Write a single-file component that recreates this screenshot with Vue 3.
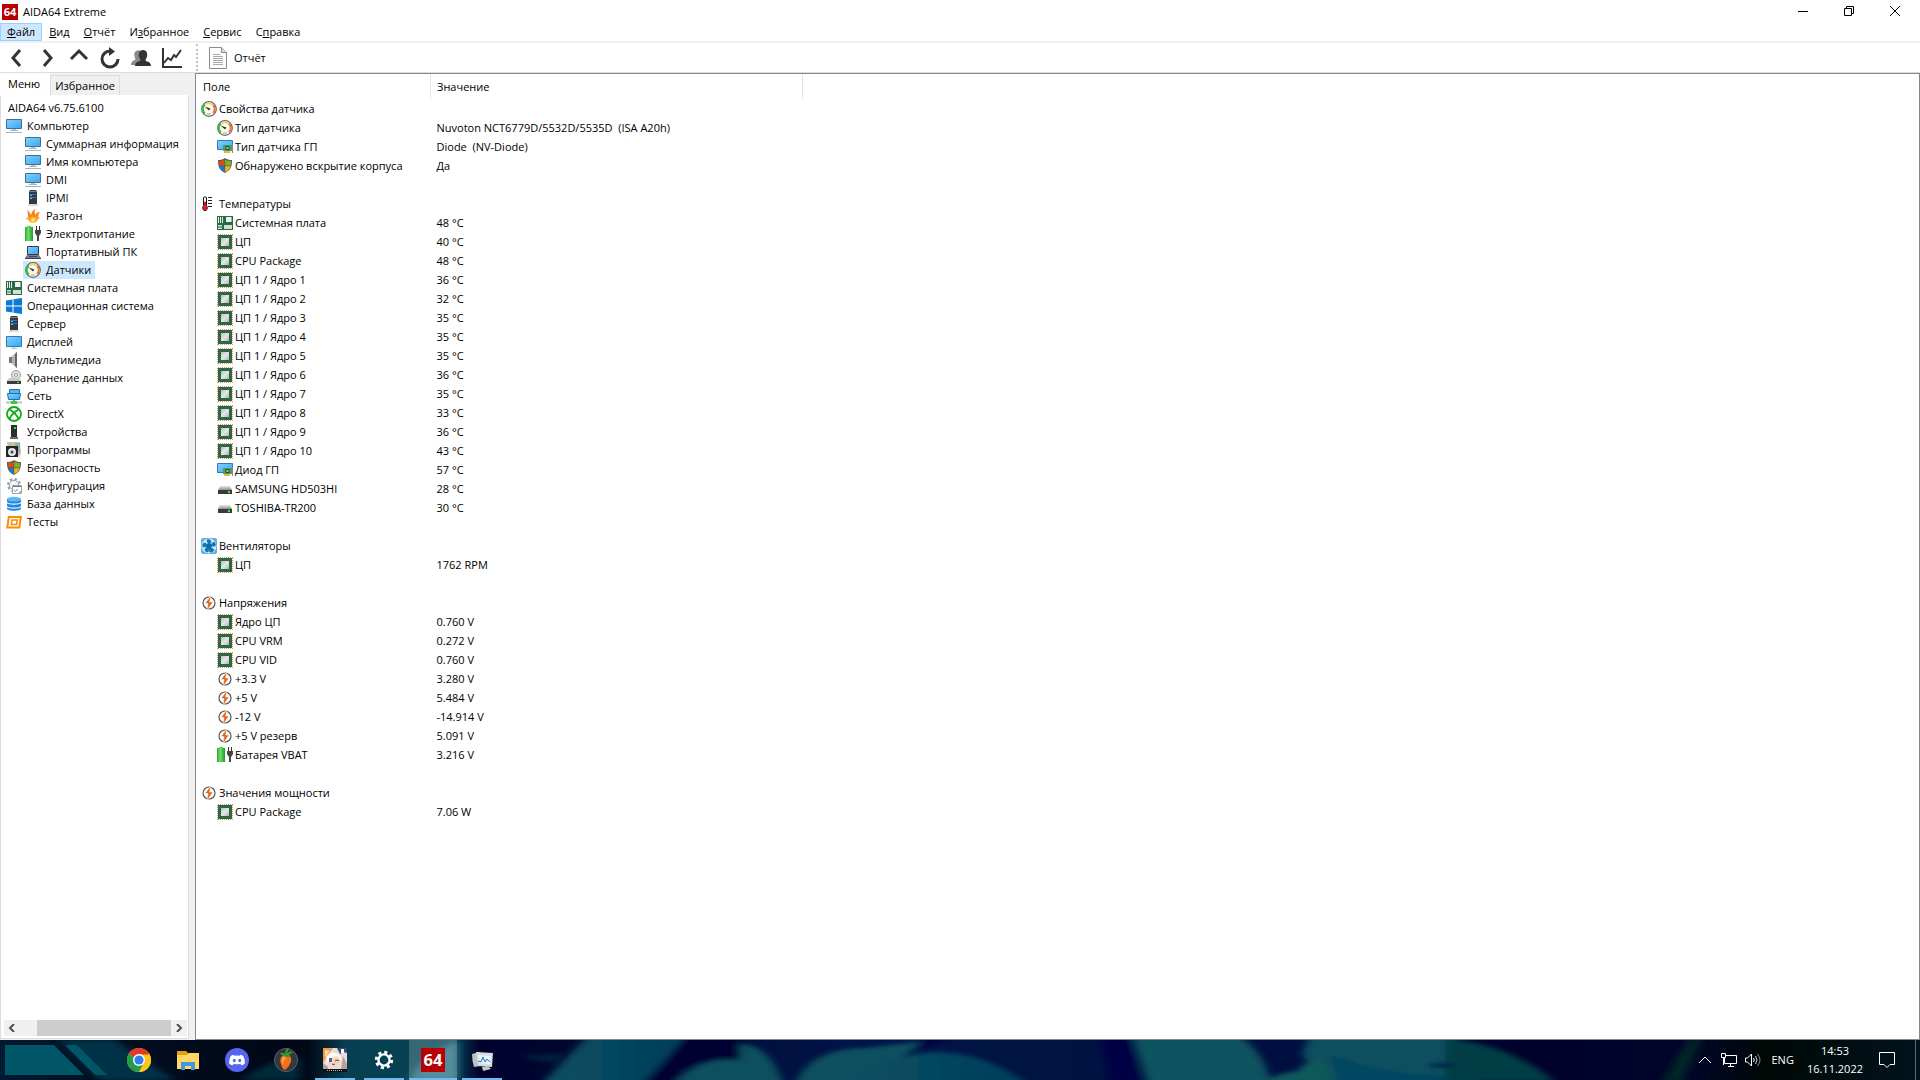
<template>
  <div class="desktop">
    <svg class="sprite" aria-hidden="true">
      <defs>
        <linearGradient id="gScreen" x1="0" y1="0" x2="1" y2="1">
          <stop offset="0" stop-color="#84d0ff" />
          <stop offset="1" stop-color="#3aa6f2" />
        </linearGradient>
        <linearGradient id="gChip" x1="0" y1="0" x2="1" y2="1">
          <stop offset="0" stop-color="#bdbdbd" />
          <stop offset="0.5" stop-color="#e6e6e6" />
          <stop offset="1" stop-color="#b4b4b4" />
        </linearGradient>
        <linearGradient id="gBattery">
          <stop offset="0" stop-color="#2ba52f" />
          <stop offset="0.4" stop-color="#6fe068" />
          <stop offset="1" stop-color="#23962a" />
        </linearGradient>
        <linearGradient id="gMetal" x1="0" y1="0" x2="0" y2="1">
          <stop offset="0" stop-color="#e8e8e8" />
          <stop offset="1" stop-color="#8f8f8f" />
        </linearGradient>
        <linearGradient id="gFlame" x1="0" y1="0" x2="0" y2="1">
          <stop offset="0" stop-color="#f05a1a" />
          <stop offset="1" stop-color="#ffc21c" />
        </linearGradient>
      </defs>
      <symbol id="computer" viewBox="0 0 16 16">
        <path d="M0.5 1.5h15v9h-15z" fill="url(#gScreen)" stroke="#3f6f92" />
        <path d="M6 11h4v2H6z" fill="#b5c2cc" />
        <path d="M4 12.5h8M0 14.5h16" stroke="#a9b4c4" />
      </symbol>
      <symbol id="display" viewBox="0 0 16 16">
        <path d="M0.5 2.5h15v10h-15z" fill="url(#gScreen)" stroke="#2b7fb5" />
        <path d="M5 14.5h6M7 13.5h2" stroke="#9cc9e6" />
      </symbol>
      <symbol id="server" viewBox="0 0 16 16">
        <path d="M5 0h6l1 2v12H4V2z" fill="#35383c" />
        <path d="M5 1h6v1H5z" fill="#7d8085" />
        <path d="M5 4.5h6M5 7.5h6" stroke="#1b7fe8" />
        <path d="M5 5.5h2M5 8.5h2" stroke="#4fc3ff" />
        <path d="M3 15h10" stroke="#b5b5b5" />
      </symbol>
      <symbol id="flame" viewBox="0 0 16 16">
        <path d="M2 2c2 1 3 3 4 5 1-3 2-5 4-6-1 3 0 4 0 6 1-2 3-3 5-3-2 2-1 3-2 5l2 1c-2 0-2 3-4 4-3 2-6 1-7-1-1-2-3-2-4-2 2-1 3 0 3-3 0-2 0-4-1-6z" fill="url(#gFlame)" />
        <path d="M7 14c-2-2 0-4 1-5 0 2 2 1 3 1-1 2-1 4-4 4z" fill="#ffe26b" />
      </symbol>
      <symbol id="power" viewBox="0 0 16 16">
        <path d="M2 0h4v1h2V15H0V1h2z" fill="url(#gBattery)" />
        <path d="M11.500 0v4M14.500 0v4" stroke="#333" />
        <path d="M10 4h6v3l-2 3h-2l-2-3z" fill="#444" />
        <path d="M13 9v6" stroke="#444" stroke-width="2" />
      </symbol>
      <symbol id="laptop" viewBox="0 0 16 16">
        <path d="M2.500 2.500h11v8h-11z" fill="url(#gScreen)" stroke="#333a42" />
        <path d="M2 11h12l2 3H0z" fill="#777e86" />
        <path d="M0 14.500h16" stroke="#383d42" />
        <path d="M4 12.500h8" stroke="#444a50" />
      </symbol>
      <symbol id="gauge" viewBox="0 0 16 16">
        <circle cx="8" cy="8" r="7.300" fill="#fffdf3" stroke="#666" stroke-width="1.200" />
        <path d="M4 12.500A5.500 5.500 0 0 1 4 3.600" fill="none" stroke="#31c431" stroke-width="2" />
        <path d="M5 3.200A5.500 5.500 0 0 1 12 4" fill="none" stroke="#f4cf74" stroke-width="2" />
        <path d="M12 4A5.500 5.500 0 0 1 12 12" fill="none" stroke="#f07331" stroke-width="2" />
        <path d="M3.500 5.500L9.500 7.500 8 9.500z" fill="#333" />
        <path d="M6 13h4" stroke="#999" />
      </symbol>
      <symbol id="board" viewBox="0 0 16 16">
        <path d="M0 1h16v14H0z" fill="#256b45" />
        <path d="M1.500 2v6M3.500 2v6M5.500 2v6" stroke="#e6eee6" />
        <path d="M9 2h5.500v5H9z" fill="#f3f3f3" />
        <path d="M1 10h4v4H1zM7 10h8v4H7z" fill="#d6ddd6" />
        <path d="M1 12h4" stroke="#256b45" />
      </symbol>
      <symbol id="windows" viewBox="0 0 16 16">
        <path d="M0 2.500l6.500-1v6H0zM7.500 1.300L16 0v7.500H7.500zM0 8.500h6.500v6L0 13.600zM7.500 8.500H16V16l-8.500-1.300z" fill="#0a7bd8" />
      </symbol>
      <symbol id="speaker" viewBox="0 0 16 16">
        <path d="M3 5h3v6H3z" fill="#6f757b" />
        <path d="M6 4l5-4v16l-5-4z" fill="#b2b6ba" />
        <path d="M9 2l2-2v16l-2-2z" fill="#62676d" />
      </symbol>
      <symbol id="storage" viewBox="0 0 16 16">
        <circle cx="10" cy="5" r="4.500" fill="#e2e2e2" stroke="#999" />
        <circle cx="10" cy="5" r="1.500" fill="#fff" stroke="#999" />
        <path d="M3 8h10l2 3H1z" fill="#c8c8c8" />
        <path d="M1 11h14v3H1z" fill="#3a3a3a" />
        <path d="M11 12.500h2" stroke="#3f3" />
      </symbol>
      <symbol id="network" viewBox="0 0 16 16">
        <path d="M3.500 1.500h10v9h-10z" fill="#56b4ef" stroke="#2173a8" />
        <path d="M1.500 5.500h13l-1 6h-11z" fill="url(#gScreen)" stroke="#2173a8" />
        <path d="M0 14.500h16" stroke="#b9c4bd" stroke-width="2" />
        <path d="M7 12h2v1h2v3H5v-3h2z" fill="#45c04b" />
      </symbol>
      <symbol id="directx" viewBox="0 0 16 16">
        <circle cx="8" cy="8" r="7" fill="#fff" stroke="#0eaa16" stroke-width="1.800" />
        <path d="M3.500 13C5 9 8 6 12.500 3.500M12.500 13C11 9 8 6 3.500 3.500" fill="none" stroke="#0eaa16" stroke-width="1.800" />
      </symbol>
      <symbol id="device" viewBox="0 0 16 16">
        <path d="M5 1h6v12H5z" fill="#2d2d2d" />
        <path d="M8 3h2v2H8z" fill="#38e138" />
        <path d="M4 13h8v2H4z" fill="#6c6c6c" />
      </symbol>
      <symbol id="programs" viewBox="0 0 16 16">
        <path d="M1 0h13l1 12-3 3H3z" fill="#c9c3ad" />
        <path d="M9 1h5v9h-4z" fill="#8cb5a5" />
        <path d="M0 4h12v11H0z" fill="#252525" />
        <circle cx="6" cy="10" r="4" fill="#e4e7eb" />
        <circle cx="6" cy="10" r="1.500" fill="#444" />
        <path d="M12 15h3" stroke="#ddd" />
      </symbol>
      <symbol id="shield" viewBox="0 0 16 16">
        <path d="M8 0c2 1.500 4 2 7 2 0 6-1 10-7 13C2 12 1 8 1 2c3 0 5-.5 7-2z" fill="#555c5f" />
        <path d="M7.500 1.800V7.500H2.200Q2 5 2 3q3 0 5.500-1.200z" fill="#e24a12" />
        <path d="M8.200 1.800V7.500h5.500Q14 5 14 3 11 3 8.200 1.800z" fill="#75b61b" />
        <path d="M2.300 8.200h5.200v5.700Q3.500 12 2.300 8.200z" fill="#1579d6" />
        <path d="M13.600 8.200H8.200v5.700Q12.500 12 13.600 8.200z" fill="#f6b418" />
      </symbol>
      <symbol id="config" viewBox="0 0 16 16">
        <circle cx="8" cy="7" r="6" fill="none" stroke="#929ba2" stroke-width="2" stroke-dasharray="2.300 2.400" />
        <circle cx="8" cy="7" r="4.700" fill="#f4f5f6" stroke="#929ba2" />
        <path d="M6.500 7.500h9v8h-9z" fill="#fff" stroke="#9da1a4" />
        <path d="M7 8.500h8" stroke="#777" />
        <path d="M8 12l1.500 1.500L12 11" fill="none" stroke="#3a8fd8" />
        <path d="M13 14h2" stroke="#777" />
      </symbol>
      <symbol id="database" viewBox="0 0 16 16">
        <path d="M1 3v9.500c0 3 14 3 14 0V3z" fill="#2386dd" />
        <ellipse cx="8" cy="3.200" rx="7" ry="2.400" fill="#5fb7f7" />
        <path d="M1 6c0 2.800 14 2.800 14 0M1 10c0 2.800 14 2.800 14 0" fill="none" stroke="#e9f5ff" stroke-width="1.200" />
      </symbol>
      <symbol id="tests" viewBox="0 0 16 16">
        <path d="M2.800 3h12l-1.500 10.500H1.300z" fill="#fff" stroke="#ff8c00" stroke-width="2" />
        <path d="M6 6h5.200l-.6 4.500H5.400z" fill="#fff" stroke="#ff8c00" stroke-width="1.600" />
      </symbol>
      <symbol id="gpu" viewBox="0 0 16 16">
        <path d="M0.500 1.500h15v9h-15z" fill="url(#gScreen)" stroke="#2b7fb5" />
        <path d="M6 6h9v6H6z" fill="#4f9a72" />
        <path d="M9 7.500h3v3H9z" fill="#9fd2b0" stroke="#164c2e" />
        <path d="M15.500 5v9" stroke="#888" />
        <path d="M7 12h6v2H7z" fill="#f0b429" />
      </symbol>
      <symbol id="thermo" viewBox="0 0 16 16">
        <path d="M2.500 1.500q1.500-1.500 3 0v8q1.500 2 .5 4-2 2.500-4 0-1-2 .5-4z" fill="#fff" stroke="#111" />
        <path d="M3.500 6h1v4l1 1v2.500h-3V11l1-1z" fill="#e0131e" stroke="#e0131e" />
        <path d="M7 1.500h4M7 4.500h4M7 7.500h4M7 10.500h4" stroke="#222" />
      </symbol>
      <symbol id="cpu" viewBox="0 0 16 16">
        <path d="M0.500 1v15M15.500 1v15M1 0.500h15M1 15.500h15" stroke="#c9a74a" stroke-dasharray="1 1" />
        <path d="M1 1h14v14H1z" fill="#2f6549" />
        <path d="M4 4h8v8H4z" fill="url(#gChip)" />
      </symbol>
      <symbol id="disk" viewBox="0 0 16 16">
        <path d="M3 5h10l2 4H1z" fill="url(#gMetal)" />
        <path d="M1 9h14v4H1z" fill="#3a3a3a" />
        <path d="M11 10h2v2h-2z" fill="#3df03d" />
      </symbol>
      <symbol id="fan" viewBox="0 0 16 16">
        <rect width="16" height="16" rx="2" fill="#5fb0de" />
        <circle cx="8" cy="8" r="7.500" fill="#cfe9f7" />
        <path d="M8 8L6 2q2-1 4 1zM8 8l5-4q2 2 1 4zM8 8l5 4q-2 3-4 2zM8 8l-1 6q-3 0-3-3zM8 8L2 9q-1-4 2-4z" fill="#1478b4" stroke="#1478b4" stroke-linejoin="round" />
        <circle cx="8" cy="8" r="2.500" fill="#0f6ba5" />
      </symbol>
      <symbol id="volt" viewBox="0 0 16 16">
        <circle cx="8" cy="8" r="6" fill="#fff" stroke="#555" stroke-width="1.200" />
        <path d="M10 0.500L4 8.500h3L6 15.500l6-8.500H8.700z" fill="#e0671c" stroke="#fff" stroke-width="0.500" />
      </symbol>
    </svg>

    <main class="window">
      <header class="titlebar">
        <svg class="logo" viewBox="0 0 16 16">
          <path d="M0 0h16v16H0z" fill="#b80000" />
          <text x="8" y="12" text-anchor="middle" class="logo-text">64</text>
        </svg>
        <h1>AIDA64 Extreme</h1>
        <div class="controls">
          <button aria-label="Свернуть">
            <svg viewBox="0 0 10 10"><path d="M0 5.500h10" /></svg>
          </button>
          <button aria-label="Свернуть в окно">
            <svg viewBox="0 0 10 10"><path d="M0.500 2.500h7v7h-7zM2.500 2.500v-2h7v7h-2" /></svg>
          </button>
          <button aria-label="Закрыть">
            <svg viewBox="0 0 10 10"><path d="M0 0l10 10M10 0L0 10" /></svg>
          </button>
        </div>
      </header>

      <nav class="menubar">
        <button v-for="(m, i) in menus" :key="m[1]" :class="{ active: i === 0 }">
          {{ m[0] }}<u>{{ m[1] }}</u>{{ m[2] }}
        </button>
      </nav>

      <div class="toolbar">
        <button aria-label="Назад">
          <svg viewBox="0 0 22 22"><path d="M14 3L7 11l7 8" /></svg>
        </button>
        <button aria-label="Вперёд">
          <svg viewBox="0 0 22 22"><path d="M7 3l7 8-7 8" /></svg>
        </button>
        <button aria-label="Вверх">
          <svg viewBox="0 0 22 22"><path d="M3 12l8-8 8 8" /></svg>
        </button>
        <button aria-label="Обновить">
          <svg viewBox="0 0 22 22">
            <path d="M11 4a8 8 0 1 0 8 8" />
            <path d="M10 0l6 4.500-6 4.500z" class="solid" />
          </svg>
        </button>
        <button aria-label="Пользователь">
          <svg viewBox="0 0 22 22">
            <path d="M1 18q0-4 4-5 1-1 0-2-2-5 1-7 3-2 6 1v13z" class="shade" />
            <path d="M5 19q0-4 5-5 1-1 0-2-2-3-1-6 1-3 4-3t4 3q1 3-1 6-1 1 0 2 5 1 5 5z" class="solid" />
          </svg>
        </button>
        <button aria-label="График">
          <svg viewBox="0 0 22 22">
            <path d="M2 1v19h19" class="thin" />
            <path d="M3 16l4-5 3 2 3-5 2 2 5-7" class="thin" />
          </svg>
        </button>
        <span class="separator"></span>
        <button class="report">
          <svg viewBox="0 0 18 22">
            <path d="M0.500 0.500h12l5 5v16h-17z" fill="#fcfcfc" stroke="#8a8a8a" />
            <path d="M12.500 0.500v5h5" fill="#ddd" stroke="#8a8a8a" />
            <path d="M4 7.500h7M4 9.500h10M4 11.500h10M4 13.500h10M4 15.500h10M4 17.500h10" stroke="#aaa" />
          </svg>
          Отчёт
        </button>
      </div>

      <div class="body">
        <aside class="side">
          <div class="tabs">
            <button class="tab current">Меню</button>
            <button class="tab">Избранное</button>
          </div>
          <div class="tree">
            <ul>
              <li class="root"><a href="#">AIDA64 v6.75.6100</a></li>
              <li v-for="n in tree" :key="n.text" :class="{ child: n.child }">
                <a href="#" :class="{ selected: n.selected }">
                  <svg class="icon"><use :href="'#' + n.icon" /></svg>{{ n.text }}
                </a>
              </li>
            </ul>
            <div class="scrollbar">
              <button aria-label="Влево"><svg viewBox="0 0 8 8"><path d="M6 0L2 4l4 4" /></svg></button>
              <div class="track"><div class="thumb"></div></div>
              <button aria-label="Вправо"><svg viewBox="0 0 8 8"><path d="M2 0l4 4-4 4" /></svg></button>
            </div>
          </div>
        </aside>

        <section class="content">
          <table>
            <thead>
              <tr>
                <th class="field">Поле</th>
                <th class="value">Значение</th>
                <th></th>
              </tr>
            </thead>
            <tbody v-for="g in groups" :key="g.title">
              <tr>
                <td>
                  <div class="cell"><svg class="icon"><use :href="'#' + g.icon" /></svg>{{ g.title }}</div>
                </td>
                <td></td>
                <td></td>
              </tr>
              <tr v-for="r in g.rows" :key="r[1]">
                <td>
                  <div class="cell nested"><svg class="icon"><use :href="'#' + r[0]" /></svg>{{ r[1] }}</div>
                </td>
                <td class="value">{{ r[2] }}</td>
                <td></td>
              </tr>
              <tr class="gap"><td colspan="3"></td></tr>
            </tbody>
          </table>
        </section>
      </div>
    </main>

    <footer class="taskbar">
      <svg class="wallpaper" viewBox="0 0 1920 40" preserveAspectRatio="none" aria-hidden="true">
        <defs>
          <filter id="soft" x="-5%" y="-50%" width="110%" height="200%"><feGaussianBlur stdDeviation="5 2" /></filter>
          <linearGradient id="gBase">
            <stop offset="0" stop-color="#001b30" />
            <stop offset="0.070" stop-color="#020c1f" />
            <stop offset="0.160" stop-color="#010817" />
            <stop offset="0.180" stop-color="#063f50" />
            <stop offset="0.235" stop-color="#064454" />
            <stop offset="0.250" stop-color="#00022d" />
            <stop offset="0.300" stop-color="#000830" />
            <stop offset="0.450" stop-color="#001448" />
            <stop offset="0.530" stop-color="#001443" />
            <stop offset="0.700" stop-color="#000d40" />
            <stop offset="0.800" stop-color="#00012b" />
            <stop offset="0.880" stop-color="#000629" />
            <stop offset="0.920" stop-color="#000805" />
            <stop offset="1" stop-color="#00131c" />
          </linearGradient>
          <linearGradient id="gTeal">
            <stop offset="0" stop-color="#0b4f5e" />
            <stop offset="1" stop-color="#003d5d" />
          </linearGradient>
        </defs>
        <path d="M0 0h1920v40H0z" fill="url(#gBase)" />
        <g filter="url(#soft)">
          <path d="M60 0h55l60 40H100z" fill="#003047" />
          <path d="M240 40q30-20 60-24v24z" fill="#002a3a" />
          <path d="M458 0q-40 20-48 40h48z" fill="#2b7186" />
          <path d="M518 17l45-4-8 10z" fill="#00203a" />
          <path d="M540 46Q570 14 590-6h100L640 46z" fill="url(#gTeal)" />
          <path d="M685-4h55v24q-35-4-60 14l-10 12h-26z" fill="#000032" />
          <path d="M672 46q24-30 68-26V4q30 0 44 42z" fill="#0b4f5e" />
          <path d="M794 46q15-38 70-38l70-8q-40 20-60 32l-10 14z" fill="#0b4f5e" />
          <path d="M840 46q50-34 100-34 50 2 90 34z" fill="url(#gTeal)" />
          <path d="M930-4h30q-30 10-50 14z" fill="#00003d" />
          <path d="M1100-4h30l12 48h-32z" fill="#000044" />
          <path d="M1132-6h105q30 20 34 52h-122z" fill="#0b5260" />
          <path d="M1310-6h145l20 52h-155q-5-16-18-32z" fill="#09505f" />
          <path d="M1330 14q50 22 130 22v10h-120z" fill="#004562" />
          <path d="M1445-2q70 8 110 44h-110z" fill="#033e45" />
          <path d="M1430 23h24v5h-24z" fill="#00204a" />
          <path d="M1265 46q8-14 30-14l20-16q15 10 20 30z" fill="#0d585a" />
          <path d="M1690-2h12l-20 44h-20z" fill="#002527" />
        </g>
      </svg>

      <button class="start" aria-label="Пуск">
        <svg viewBox="0 0 102 30">
          <path d="M0 0h49l30 30H0z" fill="#005566" />
          <path d="M60 0h12l30 30H90z" fill="#005566" />
        </svg>
      </button>

      <div class="apps">
        <button aria-label="Chrome">
          <svg viewBox="0 0 24 24">
            <circle cx="12" cy="12" r="12" fill="#fbc617" />
            <path d="M12 12L1.600 6A12 12 0 0 1 22.400 6z" fill="#df3a2d" />
            <path d="M1.600 6A12 12 0 0 0 12 24l5.200-9L12 12z" fill="#239c4b" />
            <path d="M12 6.500h10.700A12 12 0 0 1 12 24l5-9z" fill="#fbc617" />
            <circle cx="12" cy="12" r="6" fill="#fff" />
            <circle cx="12" cy="12" r="4.600" fill="#2d7fee" />
          </svg>
        </button>
        <button aria-label="Проводник">
          <svg viewBox="0 0 24 24">
            <path d="M1 3h9l2 2h11v16H1z" fill="#e4a00d" />
            <path d="M1 7h10l2-2h10v16H1z" fill="#ffd765" />
            <path d="M5 14h14v8h-4v-4H9v4H5z" fill="#3f97dc" />
          </svg>
        </button>
        <button aria-label="Discord">
          <svg viewBox="0 0 24 24">
            <circle cx="12" cy="12" r="12" fill="#5865f2" />
            <path d="M8.500 6.800l1 1q2.500-.5 5 0l1-1q2.500.6 3 1.700 1.500 3 1.400 7-1.500 1.600-3.600 1.800l-.9-1.500q-3.400 1-6.800 0l-.9 1.500Q5.500 17 4.100 15.500q-.1-4 1.400-7 .5-1.100 3-1.700z" fill="#fff" />
            <ellipse cx="9.300" cy="12.500" rx="1.500" ry="1.700" fill="#5865f2" />
            <ellipse cx="14.700" cy="12.500" rx="1.500" ry="1.700" fill="#5865f2" />
          </svg>
        </button>
        <button aria-label="FL Studio">
          <svg viewBox="0 0 24 24">
            <circle cx="12" cy="12" r="11.500" fill="#33383c" stroke="#596066" />
            <path d="M8 8q-3 3-1 8 1 5 4 6 4-3 6-8 1-5-2-6-3-2-7 0z" fill="#f2701a" />
            <path d="M9 9q-2 4 0 8 0-5 3-8z" fill="#ffae4d" />
            <path d="M11 8Q7 8 6 5q4-1 5 1 0-4 3-6l1 1-2 4q4-3 6 0-2 1-4 1l2 3q-4 1-6-1z" fill="#3c9130" />
          </svg>
        </button>
        <button class="open" aria-label="Genshin Impact">
          <svg viewBox="0 0 24 24">
            <path d="M0 0h24v24H0z" fill="#e9dcd4" />
            <path d="M0 0h10L6 6 0 15z" fill="#ee9b4b" />
            <path d="M2 2l5 1-5 6z" fill="#fbd9a4" />
            <path d="M14 0h10v5l-4-1-3 2z" fill="#35457e" />
            <path d="M18 1h3v4h-3z" fill="#fff" />
            <path d="M5 8q6-5 12 0l-1 8-5 3-5-4z" fill="#fbd3bd" />
            <path d="M3 9q5-8 14-2l2 6-5-5-6 2-4 6z" fill="#fffaf1" />
            <path d="M6 10h3v4H6z" fill="#4e65a6" />
            <path d="M12 13q2-2 4 0M9 16q2 1 3 0" fill="none" stroke="#5c3a40" />
            <path d="M0 15l5 4v3H0zM20 8l4 8v6h-6z" fill="#b89f98" />
            <path d="M0 21h24v3H0z" fill="#101016" />
            <path d="M4 22.500h16" stroke="#bbb" stroke-dasharray="1 1" />
          </svg>
        </button>
        <button class="open" aria-label="Параметры">
          <svg viewBox="0 0 24 24">
            <circle cx="12" cy="12" r="7.700" fill="none" stroke="#fff" stroke-width="3" stroke-dasharray="3.050 3" />
            <circle cx="12" cy="12" r="5.600" fill="none" stroke="#fff" stroke-width="2.400" />
          </svg>
        </button>
        <button class="open focused" aria-label="AIDA64">
          <svg viewBox="0 0 16 16">
            <path d="M0 0h16v16H0z" fill="#b80000" />
            <text x="8" y="12" text-anchor="middle" class="logo-text">64</text>
          </svg>
        </button>
        <button class="open" aria-label="Монитор">
          <svg viewBox="0 0 24 24">
            <path d="M2 6l8-2v14l-6 1q-2-6-2-13z" fill="#bfc2c5" />
            <path d="M6 4l17 1-1 14-14-1z" fill="#d9dcde" />
            <path d="M8 7l13 1-1 8-11-1z" fill="#eaf5fb" />
            <path d="M8 13l3 1 2-5 2 5 2-3 3 3" fill="none" stroke="#1f73b8" />
            <path d="M12 19l6-1 3 3-8 2z" fill="#c3c6c9" />
          </svg>
        </button>
      </div>

      <div class="tray">
        <button aria-label="Скрытые значки">
          <svg viewBox="0 0 16 16"><path d="M2 11l6-6 6 6" /></svg>
        </button>
        <button aria-label="Сеть">
          <svg viewBox="0 0 16 16">
            <path d="M5 3.500h10.500v8H3.500V6M7 14.500h6M9.500 12v2M0.500 1.500h4v4h-4zM2.500 6v7" />
          </svg>
        </button>
        <button aria-label="Громкость">
          <svg viewBox="0 0 16 16">
            <path d="M0.500 6h2l4-4v12l-4-4h-2zM8.500 6q1.500 2 0 4" />
            <path d="M10.500 4q3 4 0 8" opacity="0.8" />
            <path d="M12.500 2q5 6 0 12" opacity="0.5" />
          </svg>
        </button>
        <button class="lang">ENG</button>
        <button class="clock"><span>14:53</span><span>16.11.2022</span></button>
        <button class="notify" aria-label="Уведомления">
          <svg viewBox="0 0 16 16"><path d="M0.500 0.500h15v12H11l-3 3-3-3H0.500z" /></svg>
        </button>
        <span class="show-desktop"></span>
      </div>
    </footer>
  </div>
</template>

<script setup>
const menus = [
  ["", "Ф", "айл"],
  ["", "В", "ид"],
  ["", "О", "тчёт"],
  ["И", "з", "бранное"],
  ["", "С", "ервис"],
  ["С", "п", "равка"],
];

const tree = [
  { icon: "computer", text: "Компьютер" },
  { icon: "computer", text: "Суммарная информация", child: true },
  { icon: "computer", text: "Имя компьютера", child: true },
  { icon: "computer", text: "DMI", child: true },
  { icon: "server", text: "IPMI", child: true },
  { icon: "flame", text: "Разгон", child: true },
  { icon: "power", text: "Электропитание", child: true },
  { icon: "laptop", text: "Портативный ПК", child: true },
  { icon: "gauge", text: "Датчики", child: true, selected: true },
  { icon: "board", text: "Системная плата" },
  { icon: "windows", text: "Операционная система" },
  { icon: "server", text: "Сервер" },
  { icon: "display", text: "Дисплей" },
  { icon: "speaker", text: "Мультимедиа" },
  { icon: "storage", text: "Хранение данных" },
  { icon: "network", text: "Сеть" },
  { icon: "directx", text: "DirectX" },
  { icon: "device", text: "Устройства" },
  { icon: "programs", text: "Программы" },
  { icon: "shield", text: "Безопасность" },
  { icon: "config", text: "Конфигурация" },
  { icon: "database", text: "База данных" },
  { icon: "tests", text: "Тесты" },
];

const cores = [36, 32, 35, 35, 35, 36, 35, 33, 36, 43];

const groups = [
  {
    icon: "gauge",
    title: "Свойства датчика",
    rows: [
      ["gauge", "Тип датчика", "Nuvoton NCT6779D/5532D/5535D  (ISA A20h)"],
      ["gpu", "Тип датчика ГП", "Diode  (NV-Diode)"],
      ["shield", "Обнаружено вскрытие корпуса", "Да"],
    ],
  },
  {
    icon: "thermo",
    title: "Температуры",
    rows: [
      ["board", "Системная плата", "48 °C"],
      ["cpu", "ЦП", "40 °C"],
      ["cpu", "CPU Package", "48 °C"],
      ...cores.map((t, i) => ["cpu", `ЦП 1 / Ядро ${i + 1}`, `${t} °C`]),
      ["gpu", "Диод ГП", "57 °C"],
      ["disk", "SAMSUNG HD503HI", "28 °C"],
      ["disk", "TOSHIBA-TR200", "30 °C"],
    ],
  },
  {
    icon: "fan",
    title: "Вентиляторы",
    rows: [["cpu", "ЦП", "1762 RPM"]],
  },
  {
    icon: "volt",
    title: "Напряжения",
    rows: [
      ["cpu", "Ядро ЦП", "0.760 V"],
      ["cpu", "CPU VRM", "0.272 V"],
      ["cpu", "CPU VID", "0.760 V"],
      ["volt", "+3.3 V", "3.280 V"],
      ["volt", "+5 V", "5.484 V"],
      ["volt", "-12 V", "-14.914 V"],
      ["volt", "+5 V резерв", "5.091 V"],
      ["power", "Батарея VBAT", "3.216 V"],
    ],
  },
  {
    icon: "volt",
    title: "Значения мощности",
    rows: [["cpu", "CPU Package", "7.06 W"]],
  },
];
</script>

<style>
body {
  margin: 0;
}
</style>

<style scoped>
.desktop {
  min-height: 100vh;
  display: flex;
  flex-direction: column;
  font-family: "Open Sans", "Noto Sans", sans-serif;
  font-size: 11px;
  line-height: 18px;
  color: #000;
}

.sprite {
  position: absolute;
  width: 0;
  height: 0;
}

button {
  border: 0;
  padding: 0;
  background: none;
  font: inherit;
  color: inherit;
}

a {
  color: inherit;
  text-decoration: none;
}

.icon {
  width: 16px;
  height: 16px;
  flex: none;
}

.window {
  flex: 1;
  display: flex;
  flex-direction: column;
  background: #fff;
}

.titlebar {
  height: 23px;
  display: flex;
  align-items: center;
  padding: 0 2px;
}

.logo {
  width: 16px;
  height: 16px;
}

.logo-text {
  font: bold 11px "Open Sans", sans-serif;
  fill: #fff;
}

h1 {
  margin: 0 0 0 5px;
  flex: 1;
  font-size: 11px;
  font-weight: normal;
}

.controls {
  display: flex;
}

.controls button {
  width: 46px;
  height: 22px;
}

.controls svg {
  width: 10px;
  height: 10px;
  fill: none;
  stroke: #000;
}

.menubar {
  display: flex;
  border-bottom: 2px solid #f0f0f0;
}

.menubar button {
  padding: 0 7px;
  border: 0;
  height: 18px;
  line-height: 18px;
}

.menubar .active {
  background: #cce8ff;
  box-shadow: inset 0 0 0 1px #99d1ff;
}

.toolbar {
  height: 29px;
  display: flex;
  align-items: center;
  padding-left: 1px;
  border-bottom: 1px solid #dcdcdc;
}

.toolbar button {
  width: 31px;
  height: 28px;
  display: flex;
  align-items: center;
  justify-content: center;
}

.toolbar button svg {
  width: 22px;
  height: 22px;
  fill: none;
  stroke: #333;
  stroke-width: 3;
}

.toolbar .thin {
  stroke-width: 2;
}

.toolbar .solid {
  fill: #333;
  stroke: none;
}

.toolbar .shade {
  fill: #8a8a8a;
  stroke: none;
}

.separator {
  margin: 0 11px 0 9px;
  height: 27px;
  border-left: 2px dotted #c4c4c4;
}

.toolbar .report {
  width: auto;
  gap: 7px;
}

.toolbar .report svg {
  width: 18px;
  stroke-width: 1;
}

.body {
  flex: 1;
  display: flex;
  background: #f0f0f0;
}

.side {
  width: 189px;
  margin-right: 6px;
  display: flex;
  flex-direction: column;
}

.tabs {
  display: flex;
  align-items: flex-end;
}

.tab {
  height: 20px;
  padding: 0 4px;
  border: 1px solid #dcdcdc;
  border-bottom: 0;
}

.tab.current {
  height: 22px;
  padding: 0 9px 2px 7px;
  border-color: #fff;
  background: #fff;
}

.tree {
  flex: 1;
  display: flex;
  flex-direction: column;
  justify-content: space-between;
  margin-bottom: 1px;
  padding-top: 3px;
  border: 1px solid #dcdcdc;
  border-top-color: #fff;
  background: #fff;
}

ul {
  margin: 0;
  padding: 0;
  list-style: none;
}

li {
  display: flex;
  padding-left: 5px;
}

li a {
  height: 18px;
  display: flex;
  align-items: center;
  gap: 5px;
  white-space: nowrap;
}

.root {
  padding-left: 7px;
}

.child {
  padding-left: 22px;
}

.child a {
  padding: 0 4px 0 2px;
}

.selected {
  background: #cce8ff;
}

.scrollbar {
  height: 16px;
  display: flex;
  margin: 0 1px 2px 3px;
  background: #f0f0f0;
}

.scrollbar button {
  width: 16px;
}

.scrollbar svg {
  width: 8px;
  height: 8px;
  display: block;
  margin: auto;
  fill: none;
  stroke: #505050;
  stroke-width: 2;
}

.track {
  flex: 1;
  display: flex;
  justify-content: flex-end;
}

.thumb {
  width: 89%;
  background: #cdcdcd;
}

.content {
  flex: 1;
  border: 1px solid #828790;
  background: #fff;
}

table {
  width: 100%;
  table-layout: fixed;
  border-collapse: collapse;
}

th {
  height: 25px;
  padding: 0;
  font-weight: normal;
  text-align: left;
  border-right: 1px solid #e5e5e5;
}

th:last-child {
  width: auto;
  border-right: 0;
}

th.field {
  width: 227px;
  padding-left: 7px;
}

th.value {
  width: 365px;
}

td {
  height: 19px;
  padding: 0;
}

.value {
  padding-left: 6px;
  white-space: pre;
}

.cell {
  display: flex;
  align-items: center;
  gap: 2px;
  padding-left: 5px;
  white-space: nowrap;
}

.nested {
  padding-left: 21px;
}

.taskbar {
  position: relative;
  height: 40px;
  display: flex;
  align-items: center;
  background: #00081f;
  color: #fff;
}

.wallpaper {
  position: absolute;
  width: 100%;
  height: 100%;
}

.start,
.apps,
.tray {
  position: relative;
}

.start {
  margin: 0 8px 0 5px;
}

.start svg {
  display: block;
  width: 102px;
  height: 30px;
}

.apps {
  flex: 1;
  display: flex;
  gap: 1px;
}

.apps button {
  width: 48px;
  height: 40px;
  display: flex;
  align-items: center;
  justify-content: center;
}

.apps svg {
  width: 24px;
  height: 24px;
}

.apps .open {
  background: linear-gradient(#76b9ed, #76b9ed) center bottom / 40px 2px no-repeat;
}

.apps .focused {
  background: linear-gradient(#76b9ed, #76b9ed) bottom / 48px 2px no-repeat, #ffffff33;
}

.tray {
  display: flex;
  align-items: center;
  gap: 8px;
}

.tray svg {
  display: block;
  width: 16px;
  height: 16px;
  fill: none;
  stroke: #fff;
}

.lang {
  padding-left: 2px;
}

.clock {
  display: flex;
  flex-direction: column;
  align-items: center;
  padding: 0 8px 0 5px;
}

.notify {
  padding: 0 12px 0 0;
}

.show-desktop {
  width: 4px;
  height: 40px;
  border-left: 1px solid #5c6a78;
}
</style>
